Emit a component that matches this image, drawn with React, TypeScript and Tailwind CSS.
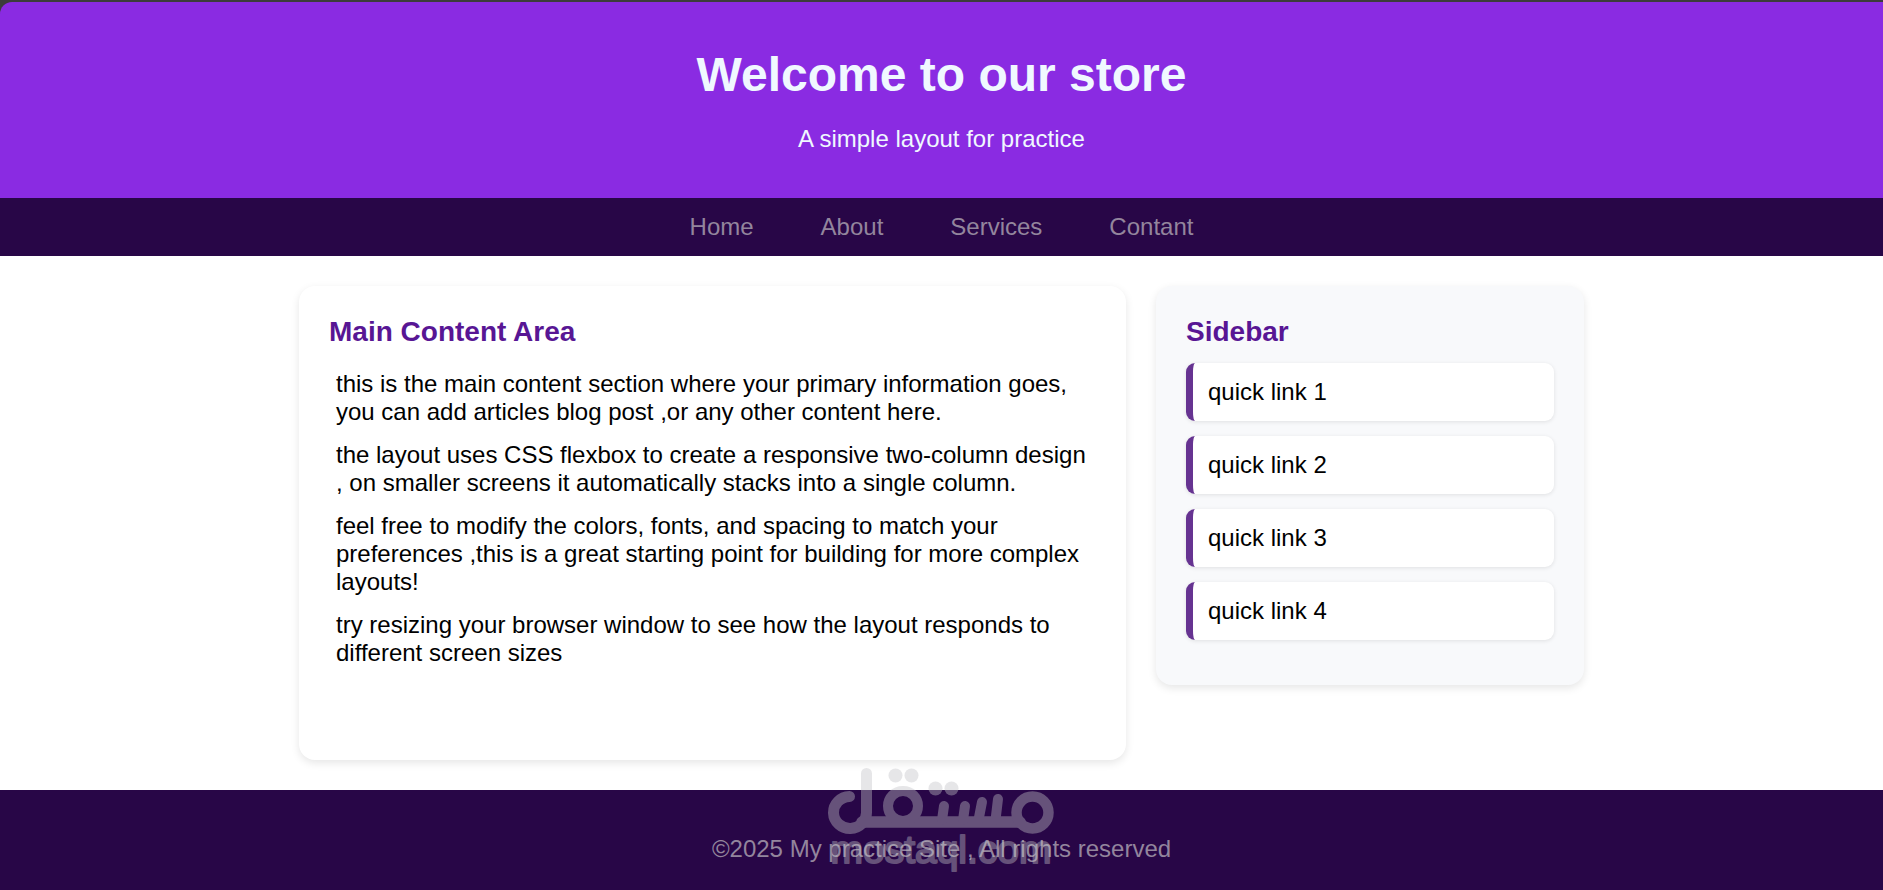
import React from 'react';

const navLinks = ['Home', 'About', 'Services', 'Contant'];

const paragraphs = [
  'this is the main content section where your primary information goes, you can add articles blog post ,or any other content here.',
  'the layout uses CSS flexbox to create a responsive two-column design , on smaller screens it automatically stacks into a single column.',
  'feel free to modify the colors, fonts, and spacing to match your preferences ,this is a great starting point for building for more complex layouts!',
  'try resizing your browser window to see how the layout responds to different screen sizes',
];

const quickLinks = ['quick link 1', 'quick link 2', 'quick link 3', 'quick link 4'];

function Watermark() {
  return (
    <svg
      className="absolute bottom-0 left-1/2 -translate-x-1/2 pointer-events-none"
      width="240"
      height="128"
      viewBox="822 762 240 128"
      fill="none"
      role="img"
      aria-label="mostaql.com"
    >
      {/* group opacity keeps the overlapping strokes flat */}
      <g opacity="0.4" stroke="#c3c3c8" strokeLinecap="round" strokeLinejoin="round">
        <path d="M849.5 796.5 A16.5 16 0 1 0 866.5 812 V773.5" strokeWidth="11" />
        <path d="M862 822 H1020" strokeWidth="11.5" />
        <circle cx="903" cy="806" r="15" strokeWidth="10" />
        <circle cx="1032.5" cy="812.5" r="16" strokeWidth="10.5" />
        <path d="M942 820 L944 806 M963 820 L965 806 M978.5 820 L982 802 M995.5 820 L998 799" strokeWidth="10" />
        <g fill="#c3c3c8" stroke="none">
          <circle cx="895.5" cy="775.5" r="7" />
          <circle cx="911.5" cy="775.5" r="7" />
          <circle cx="935.5" cy="788.5" r="7" />
          <circle cx="951.5" cy="788.5" r="7" />
        </g>
        <text
          x="941"
          y="863"
          textAnchor="middle"
          fontSize="39"
          fill="#c3c3c8"
          strokeWidth="2"
          className="font-['Liberation_Sans',Arial,sans-serif]"
        >
          mostaql.com
        </text>
      </g>
    </svg>
  );
}

export default function App() {
  return (
    <div className="min-h-screen bg-white text-2xl leading-7 text-black font-['Liberation_Sans',Arial,sans-serif]">
      <div className="bg-[#3c3c3c] pt-0.5">
        <header className="bg-[#8a2be2] text-[#f0f8ff] text-center rounded-tl-xl px-4 py-[45px]">
          <h1 className="text-5xl leading-14 font-bold mb-[22px]">Welcome to our store</h1>
          <p>A simple layout for practice</p>
        </header>
      </div>

      <nav className="bg-[#280647] py-[15px]">
        <ul className="flex flex-wrap justify-center gap-x-[67px]">
          {navLinks.map((link) => (
            <li key={link}>
              <a href="#" className="text-[#93859d] hover:text-white">
                {link}
              </a>
            </li>
          ))}
        </ul>
      </nav>

      <div className="max-w-[1345px] mx-auto p-[30px] grid grid-cols-1 lg:grid-cols-[827fr_428fr] gap-[30px] items-start">
        <main className="bg-white rounded-2xl px-[30px] pt-[30px] pb-[93px] shadow-[0_3px_8px_rgba(0,0,0,0.1)]">
          <h2 className="text-[28px] leading-8 font-bold text-[#581694] mb-[22px]">Main Content Area</h2>
          <div className="px-[7px] space-y-[15px]">
            {paragraphs.map((text) => (
              <p key={text}>{text}</p>
            ))}
          </div>
        </main>

        <aside className="bg-[#f8f9fb] rounded-2xl p-[30px] shadow-[0_3px_8px_rgba(0,0,0,0.1)]">
          <h2 className="text-[28px] leading-8 font-bold text-[#581694] mb-[15px]">Sidebar</h2>
          <ul>
            {quickLinks.map((link) => (
              <li key={link} className="mb-[15px]">
                <a
                  href="#"
                  className="block bg-white rounded-[9px] border-l-[7px] border-[#663391] p-[15px] shadow-[0_1px_4px_rgba(0,0,0,0.1)]"
                >
                  {link}
                </a>
              </li>
            ))}
          </ul>
        </aside>
      </div>

      <footer className="relative bg-[#280647] text-[#93859d] text-center pt-[45px] pb-[27px]">
        <p>©2025 My practice Site , All rights reserved</p>
        <Watermark />
      </footer>
    </div>
  );
}
